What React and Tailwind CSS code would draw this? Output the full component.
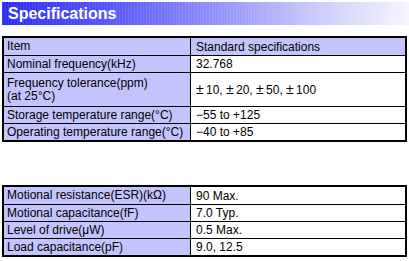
const PM = () => <span className="inline-block w-[10px] text-[14px] leading-none text-left">±</span>;

const mainRows = [
  { item: 'Nominal frequency(kHz)', value: '32.768' },
  {
    item: (
      <>
        Frequency tolerance(ppm)
        <br />
        (at 25°C)
      </>
    ),
    value: (
      <>
        <PM />10, <PM />20, <PM />50, <PM />100
      </>
    ),
    tall: true,
  },
  { item: 'Storage temperature range(°C)', value: '−55 to +125' },
  { item: 'Operating temperature range(°C)', value: '−40 to +85' },
];

const motionalRows = [
  { item: 'Motional resistance(ESR)(kΩ)', value: '90 Max.' },
  { item: 'Motional capacitance(fF)', value: '7.0 Typ.' },
  { item: 'Level of drive(μW)', value: '0.5 Max.' },
  { item: 'Load capacitance(pF)', value: '9.0, 12.5' },
];

function Row({ item, value, tall, header, first }) {
  return (
    <div className={`flex ${first ? '' : 'border-t border-black'} ${tall ? 'h-[34px]' : 'h-[17px]'}`}>
      <div className="w-[187px] shrink-0 bg-[#c4c4fc] border-r border-black pl-[3px] flex items-center leading-[13px]">
        <span>{item}</span>
      </div>
      <div className={`flex-1 pl-[5px] flex items-center ${header ? 'bg-[#c4c4fc]' : 'bg-white'}`}>
        <span>{value}</span>
      </div>
    </div>
  );
}

function SpecTable({ rows, header }) {
  return (
    <div className="w-[405px] border-2 border-black text-[12px] text-black">
      {header && <Row item="Item" value="Standard specifications" header first />}
      {rows.map((r, i) => (
        <Row key={i} {...r} first={!header && i === 0} />
      ))}
    </div>
  );
}

export default function App() {
  return (
    <div
      className="w-[409px] h-[261px] bg-white pt-[2px] pl-[2px] overflow-hidden"
      style={{ fontFamily: '"Liberation Sans", Arial, sans-serif' }}
    >
      <div className="w-[407px] h-[23px] flex items-center pl-[6px] bg-[image:repeating-linear-gradient(90deg,rgba(255,255,255,0.09)_0px,rgba(255,255,255,0.09)_1px,transparent_1px,transparent_3px),linear-gradient(90deg,#2b2bf6_0%,#5353fa_25%,#8c8cfb_50%,#c6c6fd_75%,#f6f6ff_100%)]">
        <h1 className="text-white font-bold text-[16px] leading-none">Specifications</h1>
      </div>
      <div className="mt-[11px]">
        <SpecTable rows={mainRows} header />
      </div>
      <div className="mt-[43px]">
        <SpecTable rows={motionalRows} />
      </div>
    </div>
  );
}
